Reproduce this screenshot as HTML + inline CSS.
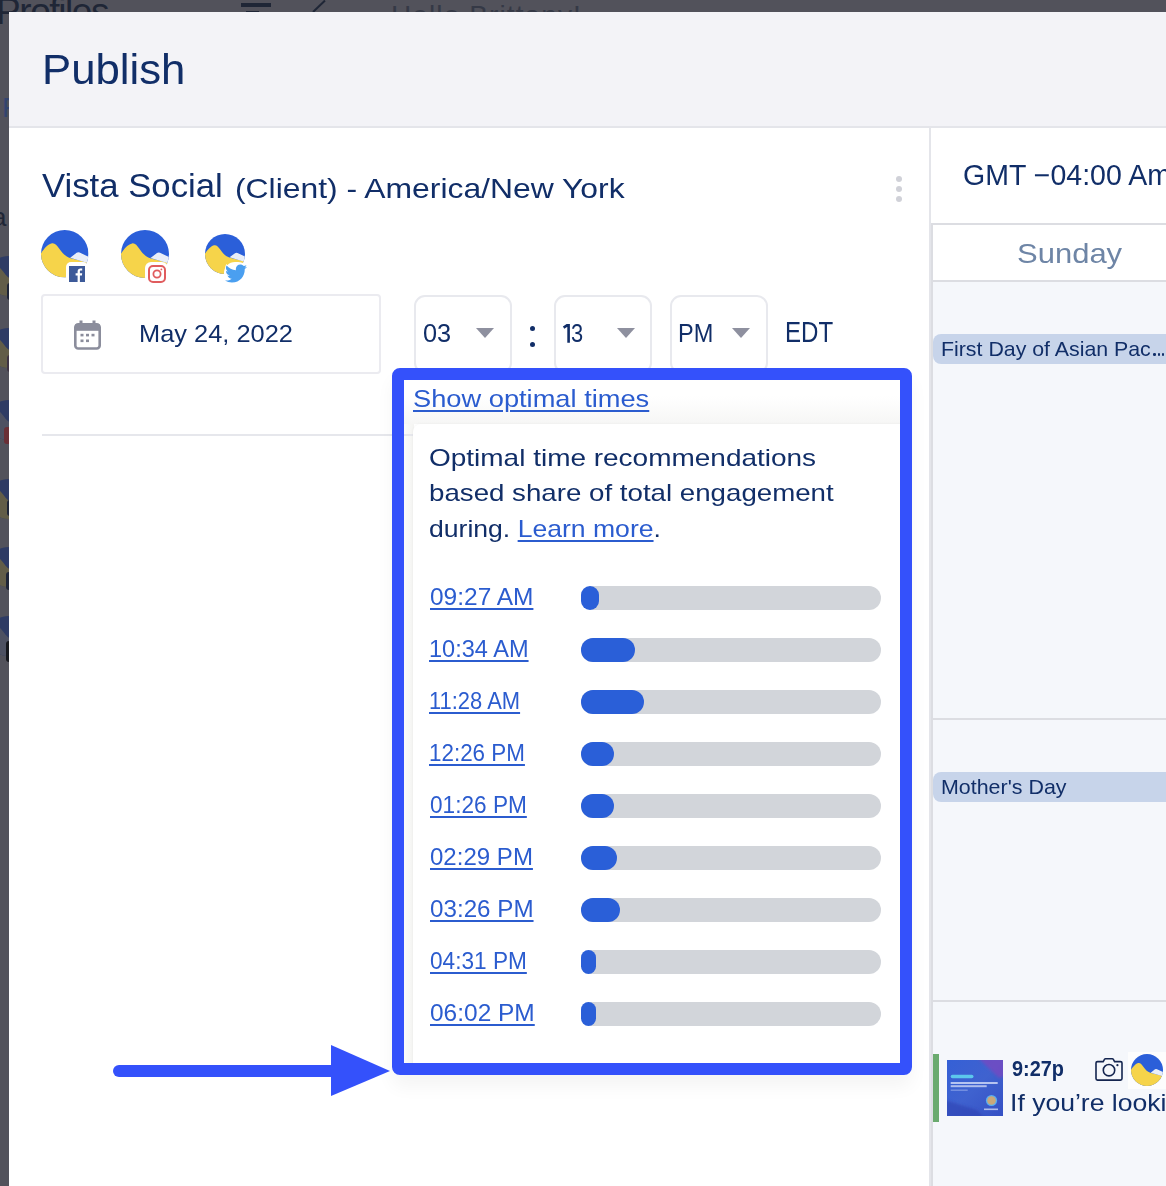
<!DOCTYPE html>
<html><head><meta charset="utf-8">
<style>
*{margin:0;padding:0;box-sizing:border-box}
html,body{width:1166px;height:1186px;overflow:hidden;background:#52525b;font-family:"Liberation Sans",sans-serif;position:relative}
.a{position:absolute}
.t{position:absolute;white-space:nowrap;line-height:1}
.u{text-decoration:underline;text-decoration-thickness:1.7px;text-underline-offset:2.6px}
svg{position:absolute;overflow:visible}
</style></head>
<body>
<div class="t" id="prof" style="left:-4.0px;top:-6.8px;font-size:37px;color:#1f2636;letter-spacing:-1.411px;">Profiles</div>
<div class="a" style="left:240.5px;top:3px;width:30.5px;height:3.5px;background:#1f2636"></div>
<div class="a" style="left:246px;top:10.5px;width:13px;height:2px;background:#1f2636"></div>
<svg style="left:311px;top:0px" width="16" height="13" viewBox="0 0 16 13"><path d="M2,12 L14,0.5" stroke="#1f2636" stroke-width="2"/></svg>
<div class="t" id="hello" style="left:391.0px;top:2.3px;font-size:28px;color:#353946;letter-spacing:1.106px;">Hello Brittany!</div>
<svg style="left:-12px;top:256px" width="40" height="40" viewBox="0 0 48 48"><defs><clipPath id="dc256"><circle cx="24" cy="24" r="24"/></clipPath></defs><g clip-path="url(#dc256)"><rect width="48" height="48" fill="#2e3b64"/><path d="M0,23.5 C3,19 7,14 11.2,13.4 C14,13 16,15.5 18.5,19 C21.5,23.5 25,27 30,28.5 L48,33 L48,48 L0,48 Z" fill="#625d48"/></g></svg>
<div class="a" style="left:7px;top:283px;width:8px;height:17px;border-radius:3px;background:#1e2538"></div>
<svg style="left:-12px;top:328px" width="40" height="40" viewBox="0 0 48 48"><defs><clipPath id="dc328"><circle cx="24" cy="24" r="24"/></clipPath></defs><g clip-path="url(#dc328)"><rect width="48" height="48" fill="#2e3b64"/><path d="M0,23.5 C3,19 7,14 11.2,13.4 C14,13 16,15.5 18.5,19 C21.5,23.5 25,27 30,28.5 L48,33 L48,48 L0,48 Z" fill="#625d48"/></g></svg>
<div class="a" style="left:7px;top:355px;width:8px;height:17px;border-radius:3px;background:#3e3444"></div>
<svg style="left:-12px;top:400px" width="40" height="40" viewBox="0 0 48 48"><defs><clipPath id="dc400"><circle cx="24" cy="24" r="24"/></clipPath></defs><g clip-path="url(#dc400)"><rect width="48" height="48" fill="#2e3b64"/><path d="M0,23.5 C3,19 7,14 11.2,13.4 C14,13 16,15.5 18.5,19 C21.5,23.5 25,27 30,28.5 L48,33 L48,48 L0,48 Z" fill="#4d5162"/></g></svg>
<div class="a" style="left:4px;top:427px;width:8px;height:17px;border-radius:3px;background:#6a2f36"></div>
<svg style="left:-12px;top:479px" width="40" height="40" viewBox="0 0 48 48"><defs><clipPath id="dc479"><circle cx="24" cy="24" r="24"/></clipPath></defs><g clip-path="url(#dc479)"><rect width="48" height="48" fill="#2e3b64"/><path d="M0,23.5 C3,19 7,14 11.2,13.4 C14,13 16,15.5 18.5,19 C21.5,23.5 25,27 30,28.5 L48,33 L48,48 L0,48 Z" fill="#625d48"/></g></svg>
<div class="a" style="left:7px;top:500px;width:8px;height:16px;border-radius:3px;background:#1e2538"></div>
<svg style="left:-12px;top:547px" width="40" height="40" viewBox="0 0 48 48"><defs><clipPath id="dc547"><circle cx="24" cy="24" r="24"/></clipPath></defs><g clip-path="url(#dc547)"><rect width="48" height="48" fill="#2e3b64"/><path d="M0,23.5 C3,19 7,14 11.2,13.4 C14,13 16,15.5 18.5,19 C21.5,23.5 25,27 30,28.5 L48,33 L48,48 L0,48 Z" fill="#625d48"/></g></svg>
<div class="a" style="left:6px;top:572px;width:8px;height:18px;border-radius:3px;background:#1e2538"></div>
<svg style="left:-12px;top:616px" width="40" height="40" viewBox="0 0 48 48"><defs><clipPath id="dc616"><circle cx="24" cy="24" r="24"/></clipPath></defs><g clip-path="url(#dc616)"><rect width="48" height="48" fill="#2e3b64"/><path d="M0,23.5 C3,19 7,14 11.2,13.4 C14,13 16,15.5 18.5,19 C21.5,23.5 25,27 30,28.5 L48,33 L48,48 L0,48 Z" fill="#4d5162"/></g></svg>
<div class="a" style="left:6px;top:641px;width:8px;height:21px;border-radius:3px;background:#15171d"></div>
<div class="t" style="left:2.0px;top:94.3px;font-size:28px;color:#33446e;letter-spacing:0.000px;">F</div>
<div class="t" style="left:-8.0px;top:204.0px;font-size:26px;color:#1f2636;letter-spacing:0.000px;">a</div>
<div class="a" style="left:9px;top:12px;width:1157px;height:1174px;background:#fff"></div>
<div class="a" style="left:9px;top:12px;width:1157px;height:116px;background:#f3f3f7;border-bottom:2px solid #e4e5ea"></div>
<div class="t" id="publish" style="left:41.8px;top:48.8px;font-size:41.6px;color:#112e68;letter-spacing:0.000px;transform:scaleX(1.0511);transform-origin:0 0;">Publish</div>
<div class="a" style="left:931px;top:281px;width:235px;height:905px;background:#f5f7fb"></div>
<div class="a" style="left:929px;top:128px;width:2px;height:1058px;background:#e4e5ea"></div>
<div class="a" style="left:931px;top:224px;width:2px;height:962px;background:#dcdde2"></div>
<div class="t" id="vista" style="left:41.8px;top:170.1px;font-size:32.7px;color:#112e68;letter-spacing:0.000px;transform:scaleX(1.0620);transform-origin:0 0;">Vista Social</div>
<div class="t" id="client" style="left:234.8px;top:174.6px;font-size:27.6px;color:#112e68;letter-spacing:0.000px;transform:scaleX(1.1548);transform-origin:0 0;">(Client) - America/New York</div>
<div class="a" style="left:896px;top:176px;width:6px;height:6px;border-radius:3px;background:#d0d1d8"></div>
<div class="a" style="left:896px;top:186px;width:6px;height:6px;border-radius:3px;background:#d0d1d8"></div>
<div class="a" style="left:896px;top:196px;width:6px;height:6px;border-radius:3px;background:#d0d1d8"></div>
<svg style="left:41px;top:230px" width="47.5" height="47.5" viewBox="0 0 48 48">
<defs><clipPath id="c1"><circle cx="24" cy="24" r="24"/></clipPath></defs>
<g clip-path="url(#c1)">
<rect width="48" height="48" fill="#2b5fd9"/>
<path d="M0,23.5 C3,19 7,14 11.2,13.4 C14,13 16,15.5 18.5,19 C21.5,23.5 25,27 30,28.5 L48,33 L48,48 L0,48 Z" fill="#f6d44a"/>
<path d="M29.5,28 L36,23 Q37.5,22 39,22.8 L48,27 L48,33.5 Z" fill="#e9eef8"/>
</g></svg>
<svg style="left:121px;top:230px" width="48" height="48" viewBox="0 0 48 48">
<defs><clipPath id="c2"><circle cx="24" cy="24" r="24"/></clipPath></defs>
<g clip-path="url(#c2)">
<rect width="48" height="48" fill="#2b5fd9"/>
<path d="M0,23.5 C3,19 7,14 11.2,13.4 C14,13 16,15.5 18.5,19 C21.5,23.5 25,27 30,28.5 L48,33 L48,48 L0,48 Z" fill="#f6d44a"/>
<path d="M29.5,28 L36,23 Q37.5,22 39,22.8 L48,27 L48,33.5 Z" fill="#e9eef8"/>
</g></svg>
<svg style="left:204.6px;top:234px" width="40" height="40" viewBox="0 0 48 48">
<defs><clipPath id="c3"><circle cx="24" cy="24" r="24"/></clipPath></defs>
<g clip-path="url(#c3)">
<rect width="48" height="48" fill="#2b5fd9"/>
<path d="M0,23.5 C3,19 7,14 11.2,13.4 C14,13 16,15.5 18.5,19 C21.5,23.5 25,27 30,28.5 L48,33 L48,48 L0,48 Z" fill="#f6d44a"/>
<path d="M29.5,28 L36,23 Q37.5,22 39,22.8 L48,27 L48,33.5 Z" fill="#e9eef8"/>
</g></svg>
<div class="a" style="left:65.5px;top:262px;width:22px;height:21px;background:#fff;border-radius:5px"></div>
<div class="a" style="left:69px;top:266px;width:16px;height:16px;background:#3d5a99"></div>
<svg style="left:69px;top:266px" width="16" height="16" viewBox="0 0 16 16"><path d="M8.6,16 V9.6 H6.6 V7.2 H8.6 V5.4 C8.6,3.4 9.8,2.4 11.5,2.4 C12.3,2.4 13,2.5 13.2,2.5 V4.6 H12 C11,4.6 10.9,5.1 10.9,5.7 V7.2 H13.2 L12.9,9.6 H10.9 V16 Z" fill="#fff"/></svg>
<div class="a" style="left:145.4px;top:261.6px;width:23px;height:21px;background:#fff;border-radius:6px"></div>
<svg style="left:148px;top:265px" width="18" height="18" viewBox="0 0 18 18"><rect x="1" y="1" width="16" height="16" rx="4" fill="none" stroke="#e05c5e" stroke-width="2"/><circle cx="9" cy="9" r="3.6" fill="none" stroke="#e05c5e" stroke-width="1.8"/><circle cx="13.4" cy="4.4" r="0.9" fill="#e05c5e"/></svg>
<div class="a" style="left:224px;top:262px;width:25px;height:22px;border-radius:11px;background:#fff"></div>
<svg style="left:225px;top:264px" width="23" height="20" viewBox="0 0 24 20"><path d="M23,2.5 C22.2,2.9 21.3,3.1 20.4,3.2 C21.4,2.6 22.1,1.7 22.4,0.6 C21.5,1.1 20.5,1.5 19.5,1.7 C18.6,0.8 17.4,0.2 16,0.2 C13.4,0.2 11.3,2.3 11.3,4.9 C11.3,5.3 11.3,5.6 11.4,6 C7.5,5.8 4,3.9 1.7,1.1 C1.3,1.8 1,2.6 1,3.5 C1,5.1 1.8,6.6 3.1,7.4 C2.3,7.4 1.6,7.2 1,6.9 C1,9.2 2.6,11.1 4.8,11.5 C4.4,11.6 4,11.7 3.5,11.7 C3.2,11.7 2.9,11.7 2.6,11.6 C3.2,13.5 4.9,14.8 7,14.9 C5.4,16.1 3.4,16.9 1.2,16.9 C0.8,16.9 0.4,16.9 0,16.8 C2.1,18.1 4.6,18.9 7.2,18.9 C15.9,18.9 20.6,11.7 20.6,5.5 L20.6,4.9 C21.6,4.3 22.4,3.4 23,2.5 Z" fill="#4a9ff0" stroke="#fff" stroke-width="1.6" paint-order="stroke"/></svg>
<div class="a" style="left:41px;top:294px;width:339.5px;height:79.5px;border:2px solid #ebebf0;border-radius:4px;background:#fff"></div>
<svg style="left:73.5px;top:319.5px" width="27" height="30" viewBox="0 0 27 30">
<rect x="1.3" y="4.3" width="24.4" height="24.2" rx="3" fill="none" stroke="#8b8d9c" stroke-width="2.6"/>
<rect x="1.3" y="4.3" width="24.4" height="6.5" fill="#8b8d9c"/>
<rect x="5.5" y="0.5" width="3" height="6" fill="#8b8d9c"/><rect x="18.5" y="0.5" width="3" height="6" fill="#8b8d9c"/>
<rect x="6.5" y="13.8" width="3" height="2.6" fill="#8b8d9c"/><rect x="12" y="13.8" width="3" height="2.6" fill="#8b8d9c"/><rect x="17.5" y="13.8" width="3" height="2.6" fill="#8b8d9c"/>
<rect x="6.5" y="19.5" width="3" height="2.6" fill="#8b8d9c"/><rect x="12" y="19.5" width="3" height="2.6" fill="#8b8d9c"/>
</svg>
<div class="t" id="date" style="left:138.5px;top:322.1px;font-size:24.4px;color:#112e68;letter-spacing:0.000px;transform:scaleX(1.0411);transform-origin:0 0;">May 24, 2022</div>
<div class="a" style="left:413.7px;top:294.5px;width:98.8px;height:79px;border:2px solid #e8e9ee;border-radius:11px;background:#fff"></div>
<div class="t" id="h" style="left:423.0px;top:321.4px;font-size:25.5px;color:#112e68;letter-spacing:0.000px;transform:scaleX(0.9933);transform-origin:0 0;">03</div>
<svg style="left:476px;top:328px" width="18" height="10" viewBox="0 0 18 10"><path d="M0,0 H18 L9,10 Z" fill="#8e909f"/></svg>
<div class="a" style="left:553.7px;top:294.5px;width:98.8px;height:79px;border:2px solid #e8e9ee;border-radius:11px;background:#fff"></div>
<svg style="left:616.8px;top:328px" width="18" height="10" viewBox="0 0 18 10"><path d="M0,0 H18 L9,10 Z" fill="#8e909f"/></svg>
<div class="a" style="left:669.8px;top:294.5px;width:98.5px;height:79px;border:2px solid #e8e9ee;border-radius:11px;background:#fff"></div>
<div class="t" id="ap" style="left:678.2px;top:321.4px;font-size:25.5px;color:#112e68;letter-spacing:0.000px;transform:scaleX(0.9226);transform-origin:0 0;">PM</div>
<svg style="left:732px;top:328px" width="18" height="10" viewBox="0 0 18 10"><path d="M0,0 H18 L9,10 Z" fill="#8e909f"/></svg>
<svg style="left:563px;top:325px" width="7" height="18" viewBox="0 0 7 18"><path d="M0.6,2.6 L4,0.3 H5.6 V17.8" fill="none" stroke="#112e68" stroke-width="2.6" stroke-linejoin="miter"/></svg>
<div class="t" id="m3" style="left:571.1px;top:321.4px;font-size:25.5px;color:#112e68;letter-spacing:0.000px;transform:scaleX(0.8571);transform-origin:0 0;">3</div>
<div class="a" style="left:530px;top:326px;width:5px;height:5px;border-radius:3px;background:#112e68"></div>
<div class="a" style="left:530px;top:341.5px;width:5px;height:5px;border-radius:3px;background:#112e68"></div>
<div class="t" id="edt" style="left:785.1px;top:318.4px;font-size:28.8px;color:#112e68;letter-spacing:0.000px;transform:scaleX(0.8363);transform-origin:0 0;">EDT</div>
<div class="a" style="left:41.5px;top:433.5px;width:857px;height:2px;background:#e6e7ec"></div>
<div class="a" style="left:404px;top:380px;width:496px;height:683px;background:#fff"></div>
<div class="a" style="left:404px;top:396px;width:496px;height:28px;background:linear-gradient(#fff,#f6f6f5)"></div>
<div class="a" style="left:404px;top:424px;width:10px;height:639px;background:linear-gradient(90deg,#fbfbfa,#f4f4f2)"></div>
<div class="a" style="left:404px;top:433.5px;width:10px;height:2px;background:#e6e7ec"></div>
<div class="a" style="left:404px;top:380px;width:496px;height:683px;overflow:hidden"><div class="a" style="left:9px;top:43.5px;width:500px;height:700px;background:#fff;border-radius:8px;box-shadow:0 0 3px rgba(0,0,0,0.05)"></div></div>
<div class="t u" id="show" style="left:412.8px;top:387.1px;font-size:24.2px;color:#2b5ccf;letter-spacing:0.000px;transform:scaleX(1.1265);transform-origin:0 0;">Show optimal times</div>
<div class="t" id="p1" style="left:428.8px;top:445.5px;font-size:23.8px;color:#112e68;letter-spacing:0.000px;transform:scaleX(1.1754);transform-origin:0 0;">Optimal time recommendations</div>
<div class="t" id="p2" style="left:428.8px;top:481.4px;font-size:23.8px;color:#112e68;letter-spacing:0.000px;transform:scaleX(1.1631);transform-origin:0 0;">based share of total engagement</div>
<div class="t" id="p3" style="left:428.9px;top:517.4px;font-size:23.8px;color:#112e68;letter-spacing:0.000px;transform:scaleX(1.1167);transform-origin:0 0;">during. <span class="u" style="color:#2b5ccf">Learn more</span>.</div>
<div class="t u" id="r0" style="left:430.2px;top:584.9px;font-size:24.7px;color:#2b5ccf;letter-spacing:0.000px;transform:scaleX(0.9913);transform-origin:0 0;">09:27 AM</div>
<div class="a" style="left:581px;top:586px;width:300px;height:24px;border-radius:12px;background:#d2d5da"></div>
<div class="a" style="left:581px;top:586px;width:18px;height:24px;border-radius:12px;background:#2a5fd8"></div>
<div class="t u" id="r1" style="left:429.2px;top:636.9px;font-size:24.7px;color:#2b5ccf;letter-spacing:0.000px;transform:scaleX(0.9544);transform-origin:0 0;">10:34 AM</div>
<div class="a" style="left:581px;top:638px;width:300px;height:24px;border-radius:12px;background:#d2d5da"></div>
<div class="a" style="left:581px;top:638px;width:54px;height:24px;border-radius:12px;background:#2a5fd8"></div>
<div class="t u" id="r2" style="left:429.3px;top:688.9px;font-size:24.7px;color:#2b5ccf;letter-spacing:0.000px;transform:scaleX(0.8887);transform-origin:0 0;">11:28 AM</div>
<div class="a" style="left:581px;top:690px;width:300px;height:24px;border-radius:12px;background:#d2d5da"></div>
<div class="a" style="left:581px;top:690px;width:63px;height:24px;border-radius:12px;background:#2a5fd8"></div>
<div class="t u" id="r3" style="left:429.3px;top:740.9px;font-size:24.7px;color:#2b5ccf;letter-spacing:0.000px;transform:scaleX(0.9078);transform-origin:0 0;">12:26 PM</div>
<div class="a" style="left:581px;top:742px;width:300px;height:24px;border-radius:12px;background:#d2d5da"></div>
<div class="a" style="left:581px;top:742px;width:33px;height:24px;border-radius:12px;background:#2a5fd8"></div>
<div class="t u" id="r4" style="left:430.2px;top:792.9px;font-size:24.7px;color:#2b5ccf;letter-spacing:0.000px;transform:scaleX(0.9164);transform-origin:0 0;">01:26 PM</div>
<div class="a" style="left:581px;top:794px;width:300px;height:24px;border-radius:12px;background:#d2d5da"></div>
<div class="a" style="left:581px;top:794px;width:33px;height:24px;border-radius:12px;background:#2a5fd8"></div>
<div class="t u" id="r5" style="left:430.2px;top:844.9px;font-size:24.7px;color:#2b5ccf;letter-spacing:0.000px;transform:scaleX(0.9740);transform-origin:0 0;">02:29 PM</div>
<div class="a" style="left:581px;top:846px;width:300px;height:24px;border-radius:12px;background:#d2d5da"></div>
<div class="a" style="left:581px;top:846px;width:36px;height:24px;border-radius:12px;background:#2a5fd8"></div>
<div class="t u" id="r6" style="left:430.2px;top:896.9px;font-size:24.7px;color:#2b5ccf;letter-spacing:0.000px;transform:scaleX(0.9798);transform-origin:0 0;">03:26 PM</div>
<div class="a" style="left:581px;top:898px;width:300px;height:24px;border-radius:12px;background:#d2d5da"></div>
<div class="a" style="left:581px;top:898px;width:39px;height:24px;border-radius:12px;background:#2a5fd8"></div>
<div class="t u" id="r7" style="left:430.2px;top:948.9px;font-size:24.7px;color:#2b5ccf;letter-spacing:0.000px;transform:scaleX(0.9164);transform-origin:0 0;">04:31 PM</div>
<div class="a" style="left:581px;top:950px;width:300px;height:24px;border-radius:12px;background:#d2d5da"></div>
<div class="a" style="left:581px;top:950px;width:15px;height:24px;border-radius:12px;background:#2a5fd8"></div>
<div class="t u" id="r8" style="left:430.2px;top:1000.9px;font-size:24.7px;color:#2b5ccf;letter-spacing:0.000px;transform:scaleX(0.9913);transform-origin:0 0;">06:02 PM</div>
<div class="a" style="left:581px;top:1002px;width:300px;height:24px;border-radius:12px;background:#d2d5da"></div>
<div class="a" style="left:581px;top:1002px;width:15px;height:24px;border-radius:12px;background:#2a5fd8"></div>
<div class="a" style="left:392px;top:368px;width:520px;height:707px;border:12px solid #3451fb;border-radius:8px;box-shadow:0 12px 18px rgba(0,0,0,0.045)"></div>
<div class="a" style="left:113px;top:1065px;width:225px;height:12px;border-radius:6px;background:#3451fb"></div>
<svg style="left:331px;top:1045px" width="60" height="51" viewBox="0 0 60 51"><path d="M0,0 L59,26 L0,51 Z" fill="#3451fb"/></svg>
<div class="t" id="gmt" style="left:962.9px;top:160.6px;font-size:28.6px;color:#112e68;letter-spacing:0.000px;transform:scaleX(0.9973);transform-origin:0 0;">GMT −04:00 America/New_York</div>
<div class="a" style="left:931px;top:222.5px;width:235px;height:2px;background:#dcdde2"></div>
<div class="t" id="sun" style="left:1016.9px;top:239.8px;font-size:28px;color:#6e85a6;letter-spacing:0.000px;transform:scaleX(1.1068);transform-origin:0 0;">Sunday</div>
<div class="a" style="left:933px;top:279.5px;width:233px;height:2px;background:#dcdde2"></div>
<div class="a" style="left:933px;top:334px;width:240px;height:30px;border-radius:8px;background:#c7d4ea"></div>
<div class="t" id="ev1" style="left:941.1px;top:338.8px;font-size:20.2px;color:#112e68;letter-spacing:0.000px;transform:scaleX(1.0564);transform-origin:0 0;">First Day of Asian Pac</div>
<div class="a" style="left:1153.3px;top:353.3px;width:2.6px;height:2.6px;border-radius:1.3px;background:#112e68"></div>
<div class="a" style="left:1157.6px;top:353.3px;width:2.6px;height:2.6px;border-radius:1.3px;background:#112e68"></div>
<div class="a" style="left:1161.9px;top:353.3px;width:2.6px;height:2.6px;border-radius:1.3px;background:#112e68"></div>
<div class="a" style="left:933px;top:718px;width:233px;height:2px;background:#dcdde2"></div>
<div class="a" style="left:933px;top:772.3px;width:240px;height:29.5px;border-radius:8px;background:#c7d4ea"></div>
<div class="t" id="ev2" style="left:941.1px;top:777.3px;font-size:20.2px;color:#112e68;letter-spacing:0.000px;transform:scaleX(1.0610);transform-origin:0 0;">Mother's Day</div>
<div class="a" style="left:933px;top:999.5px;width:233px;height:2px;background:#dcdde2"></div>
<div class="a" style="left:933px;top:1054px;width:6px;height:67.5px;background:#6aaa6e"></div>
<svg style="left:947px;top:1060px" width="56" height="56" viewBox="0 0 56 56">
<defs><linearGradient id="tg" x1="0" y1="0" x2="1" y2="1"><stop offset="0" stop-color="#3560d6"/><stop offset="0.5" stop-color="#3f62cf"/><stop offset="1" stop-color="#3550c4"/></linearGradient>
<filter id="bl" x="-20%" y="-20%" width="140%" height="140%"><feGaussianBlur stdDeviation="1.6"/></filter><clipPath id="tc"><rect width="56" height="56"/></clipPath></defs>
<rect width="56" height="56" fill="url(#tg)"/>
<g clip-path="url(#tc)"><g filter="url(#bl)"><path d="M31,-2 L58,-2 L58,16 L52,18 Z" fill="#7a48c0" opacity="0.75"/>
<path d="M-2,40 L30,50 L38,58 H-2 Z" fill="#2c3fb0" opacity="0.6"/></g></g>
<rect x="3.7" y="14.7" width="22.8" height="3.6" rx="1.8" fill="#5cc8ec"/>
<rect x="3.7" y="22" width="47" height="2" fill="#dfe6fb" opacity="0.75"/><rect x="3.7" y="25.2" width="36" height="2" fill="#dfe6fb" opacity="0.7"/>
<rect x="3.7" y="29.5" width="17" height="1.4" fill="#a9b9ee" opacity="0.55"/>
<circle cx="44.5" cy="40.5" r="5.6" fill="#5aaef0"/><circle cx="44.5" cy="40.5" r="4.3" fill="#c9a87a"/>
<rect x="37" y="48.5" width="14" height="1.6" fill="#dfe6fb" opacity="0.7"/>
</svg>
<div class="t" id="time" style="left:1012.2px;top:1058.6px;font-size:21.5px;color:#112e68;letter-spacing:0.000px;font-weight:bold;transform:scaleX(0.9245);transform-origin:0 0;">9:27p</div>
<svg style="left:1095px;top:1058px" width="28" height="23" viewBox="0 0 28 23"><path d="M2.5,3.6 H8.2 L9.6,1.2 Q9.9,0.8 10.5,0.8 H17.3 Q17.9,0.8 18.2,1.2 L19.6,3.6 H25.5 Q27,3.6 27,5.1 V20.6 Q27,22.1 25.5,22.1 H2.5 Q1,22.1 1,20.6 V5.1 Q1,3.6 2.5,3.6 Z" fill="none" stroke="#14254f" stroke-width="1.6"/><circle cx="14" cy="12.2" r="5.7" fill="none" stroke="#14254f" stroke-width="1.6"/><circle cx="22.4" cy="7.2" r="1.1" fill="#14254f"/></svg>
<div class="a" style="left:1128px;top:1052px;width:38px;height:37px;background:#fdfdfd"></div>
<svg style="left:1130.7px;top:1054px" width="32" height="32" viewBox="0 0 48 48">
<defs><clipPath id="c4"><circle cx="24" cy="24" r="24"/></clipPath></defs>
<g clip-path="url(#c4)">
<rect width="48" height="48" fill="#2b5fd9"/>
<path d="M0,23.5 C3,19 7,14 11.2,13.4 C14,13 16,15.5 18.5,19 C21.5,23.5 25,27 30,28.5 L48,33 L48,48 L0,48 Z" fill="#f6d44a"/>
<path d="M29.5,28 L36,23 Q37.5,22 39,22.8 L48,27 L48,33.5 Z" fill="#e9eef8"/>
</g></svg>
<div class="t" id="post" style="left:1009.8px;top:1091.3px;font-size:24px;color:#112e68;letter-spacing:0.000px;transform:scaleX(1.1067);transform-origin:0 0;">If you’re looking</div>
</body></html>
